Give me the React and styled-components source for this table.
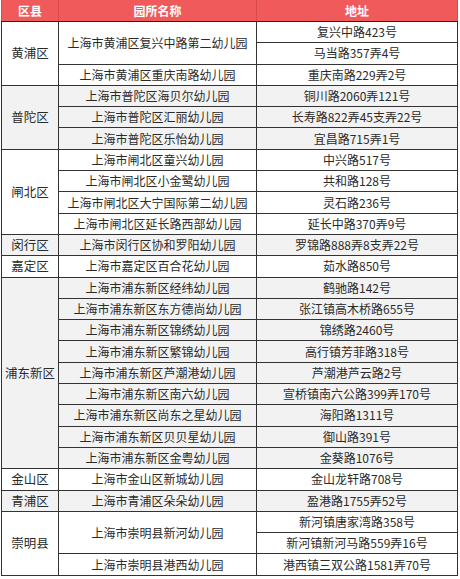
import styled, { createGlobalStyle } from 'styled-components';

const GlobalStyle = createGlobalStyle`
  html, body {
    margin: 0;
    padding: 0;
    background: #ffffff;
  }
  body {
    font-family: "Noto Sans CJK SC", "Microsoft YaHei", sans-serif;
  }
`;

const Page = styled.div`
  padding: 0 0 0 1px;
`;

const Table = styled.table`
  border-collapse: collapse;
  table-layout: fixed;
  width: 456px;
  font-size: 12px;
  color: #2a2a2a;
  border-bottom: 1px solid #222;
  border-left: 1px solid #222;
  border-right: 1px solid #222;
`;

const HeadCell = styled.th`
  background: #f05a5b;
  color: #ffffff;
  font-weight: bold;
  font-size: 12px;
  height: 21px;
  padding: 0;
  text-align: center;
  border: 1px solid #d84a4b;
  border-top: none;
  border-bottom: 1px solid #222;
`;

const Row = styled.tr`
  height: 21.3px;
  background: ${(p) => (p.$shade ? '#f2f2f2' : '#ffffff')};
`;

const Cell = styled.td`
  padding: 0;
  text-align: center;
  white-space: nowrap;
  line-height: 20px;
  border: 1px solid #333;
  border-top-color: ${(p) => (p.$first ? '#222' : '#444')};
`;

const DistrictCell = styled(Cell)`
  font-size: 12.5px;
`;

const data = [
  ['黄浦区', [
    ['上海市黄浦区复兴中路第二幼儿园', ['复兴中路423号', '马当路357弄4号']],
    ['上海市黄浦区重庆南路幼儿园', ['重庆南路229弄2号']],
  ]],
  ['普陀区', [
    ['上海市普陀区海贝尔幼儿园', ['铜川路2060弄121号']],
    ['上海市普陀区汇丽幼儿园', ['长寿路822弄45支弄22号']],
    ['上海市普陀区乐怡幼儿园', ['宜昌路715弄1号']],
  ]],
  ['闸北区', [
    ['上海市闸北区童兴幼儿园', ['中兴路517号']],
    ['上海市闸北区小金鹭幼儿园', ['共和路128号']],
    ['上海市闸北区大宁国际第二幼儿园', ['灵石路236号']],
    ['上海市闸北区延长路西部幼儿园', ['延长中路370弄9号']],
  ]],
  ['闵行区', [
    ['上海市闵行区协和罗阳幼儿园', ['罗锦路888弄8支弄22号']],
  ]],
  ['嘉定区', [
    ['上海市嘉定区百合花幼儿园', ['茹水路850号']],
  ]],
  ['浦东新区', [
    ['上海市浦东新区经纬幼儿园', ['鹤驰路142号']],
    ['上海市浦东新区东方德尚幼儿园', ['张江镇高木桥路655号']],
    ['上海市浦东新区锦绣幼儿园', ['锦绣路2460号']],
    ['上海市浦东新区繁锦幼儿园', ['高行镇芳菲路318号']],
    ['上海市浦东新区芦潮港幼儿园', ['芦潮港芦云路2号']],
    ['上海市浦东新区南六幼儿园', ['宣桥镇南六公路399弄170号']],
    ['上海市浦东新区尚东之星幼儿园', ['海阳路1311号']],
    ['上海市浦东新区贝贝星幼儿园', ['御山路391号']],
    ['上海市浦东新区金粤幼儿园', ['金葵路1076号']],
  ]],
  ['金山区', [
    ['上海市金山区新城幼儿园', ['金山龙轩路708号']],
  ]],
  ['青浦区', [
    ['上海市青浦区朵朵幼儿园', ['盈港路1755弄52号']],
  ]],
  ['崇明县', [
    ['上海市崇明县新河幼儿园', ['新河镇唐家湾路358号', '新河镇新河马路559弄16号']],
    ['上海市崇明县港西幼儿园', ['港西镇三双公路1581弄70号']],
  ]],
];

const DistrictRows = ({ district, schools, shade }) => {
  const total = schools.reduce((n, s) => n + s[1].length, 0);
  const rows = [];
  schools.forEach(([name, addrs], si) => {
    addrs.forEach((addr, ai) => {
      const first = si === 0 && ai === 0;
      rows.push(
        <Row key={`${name}-${ai}`} $shade={shade}>
          {first && (
            <DistrictCell rowSpan={total} $first>
              {district}
            </DistrictCell>
          )}
          {ai === 0 && (
            <Cell rowSpan={addrs.length} $first={first}>
              {name}
            </Cell>
          )}
          <Cell $first={first}>{addr}</Cell>
        </Row>
      );
    });
  });
  return rows;
};

export default function App() {
  return (
    <Page>
      <GlobalStyle />
      <Table>
        <colgroup>
          <col style={{ width: 57 }} />
          <col style={{ width: 198 }} />
          <col style={{ width: 201 }} />
        </colgroup>
        <thead>
          <tr>
            <HeadCell>区县</HeadCell>
            <HeadCell>园所名称</HeadCell>
            <HeadCell>地址</HeadCell>
          </tr>
        </thead>
        <tbody>
          {data.map(([district, schools], i) => (
            <DistrictRows
              key={district}
              district={district}
              schools={schools}
              shade={i % 2 === 1}
            />
          ))}
        </tbody>
      </Table>
    </Page>
  );
}
